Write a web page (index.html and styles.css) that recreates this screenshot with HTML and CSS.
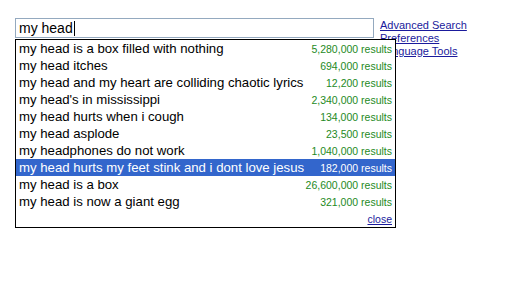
FILE: index.html
```html
<!DOCTYPE html>
<html>
<head>
<meta charset="utf-8">
<link rel="stylesheet" href="styles.css">
</head>
<body>
<div class="page">
  <div class="search-row">
    <div class="query-wrap">
      <div class="query">my head<span class="caret"></span></div>
      <div class="suggest">
        <div class="item"><span class="q">my head is a box filled with nothing</span><span class="n">5,280,000 results</span></div>
        <div class="item"><span class="q">my head itches</span><span class="n">694,000 results</span></div>
        <div class="item"><span class="q">my head and my heart are colliding chaotic lyrics</span><span class="n">12,200 results</span></div>
        <div class="item"><span class="q">my head's in mississippi</span><span class="n">2,340,000 results</span></div>
        <div class="item"><span class="q">my head hurts when i cough</span><span class="n">134,000 results</span></div>
        <div class="item"><span class="q">my head asplode</span><span class="n">23,500 results</span></div>
        <div class="item"><span class="q">my headphones do not work</span><span class="n">1,040,000 results</span></div>
        <div class="item sel"><span class="q">my head hurts my feet stink and i dont love jesus</span><span class="n">182,000 results</span></div>
        <div class="item"><span class="q">my head is a box</span><span class="n">26,600,000 results</span></div>
        <div class="item"><span class="q">my head is now a giant egg</span><span class="n">321,000 results</span></div>
        <div class="item close-row"><a class="close" href="#">close</a></div>
      </div>
    </div>
    <div class="links">
      <a href="#">Advanced Search</a>
      <a href="#">Preferences</a>
      <a href="#">Language Tools</a>
    </div>
  </div>
</div>
</body>
</html>
```

FILE: styles.css
```css
html, body {
  margin: 0;
  padding: 0;
  background: #fff;
}
body {
  min-height: 284px;
}
.page {
  min-height: 266px;
  padding: 18px 0 0 15px;
  font-family: "Liberation Sans", Arial, sans-serif;
}
.search-row {
  display: flex;
  align-items: flex-start;
  gap: 6px;
}
.query-wrap {
  position: relative;
}
.query {
  box-sizing: border-box;
  width: 359px;
  height: 20px;
  border: 1px solid #94a9bf;
  font-size: 14px;
  line-height: 18px;
  padding-left: 3px;
  color: #000;
  display: flex;
  align-items: center;
}
.caret {
  display: inline-block;
  width: 1px;
  height: 15px;
  background: #000;
  margin-left: 1px;
}
.suggest {
  position: absolute;
  left: 0;
  top: 21px;
  width: 381px;
  box-sizing: border-box;
  border: 1px solid #000;
  background: #fff;
}
.item {
  height: 17px;
  display: flex;
  align-items: center;
  justify-content: space-between;
  padding: 0 3px;
  white-space: nowrap;
}
.q {
  font-size: 13.2px;
  color: #000;
}
.n {
  font-size: 10.5px;
  color: #1e8a1e;
}
.sel {
  background: #3366cc;
}
.sel .q, .sel .n {
  color: #fff;
}
.close-row {
  justify-content: flex-end;
}
.close {
  font-size: 10.5px;
  color: #1a1a9c;
  text-decoration: underline;
}
.links {
  display: flex;
  flex-direction: column;
  padding-top: 1px;
}
.links a {
  font-size: 11px;
  line-height: 13px;
  color: #1a1a9c;
  text-decoration: underline;
}
```
